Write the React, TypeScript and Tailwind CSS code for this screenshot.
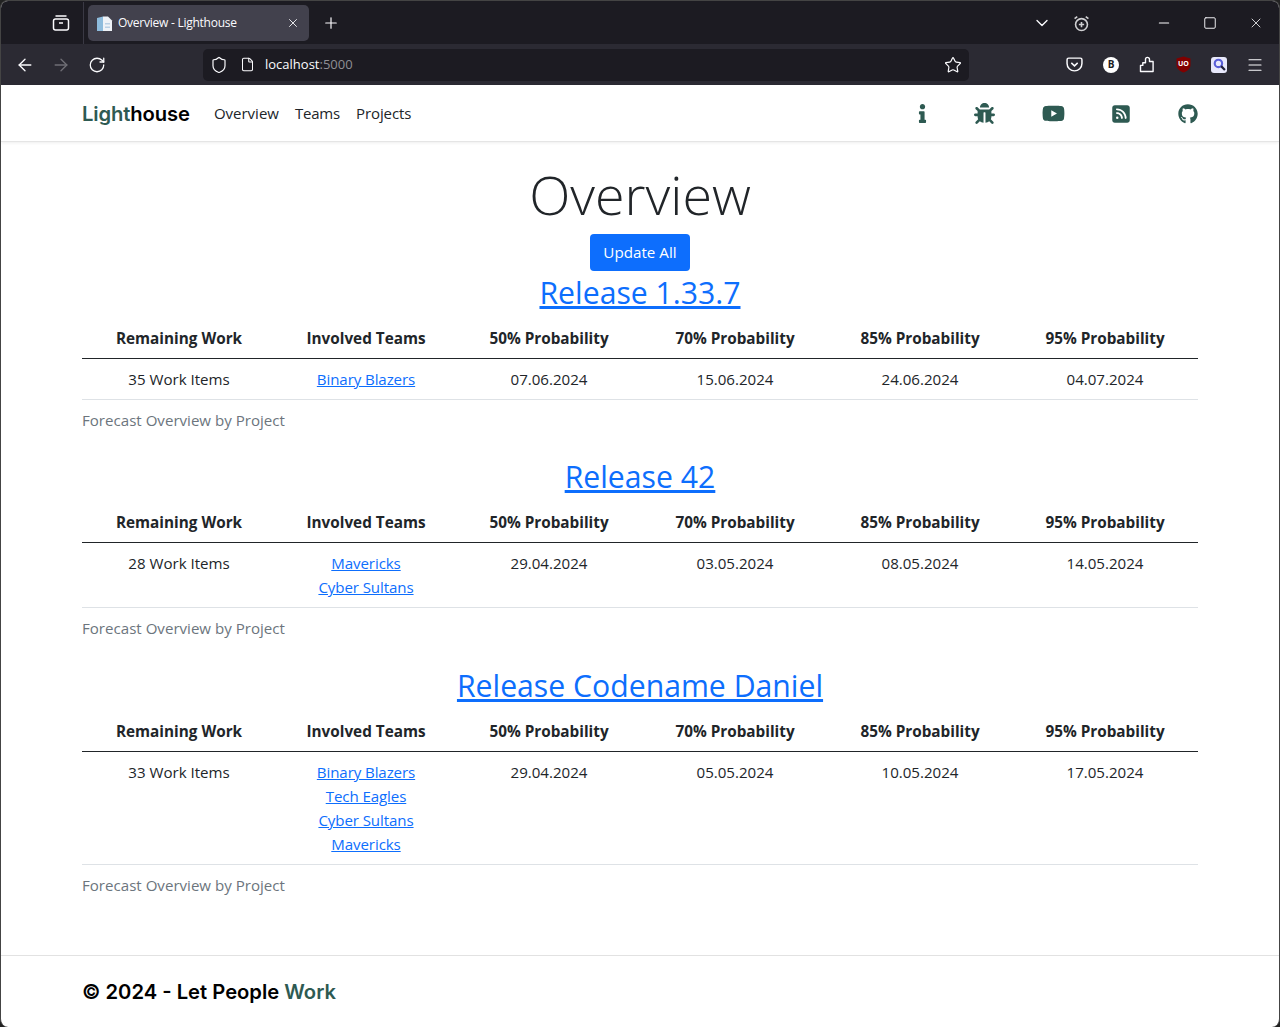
import { ArrowLeft, ArrowRight, ChevronDown, File, Menu, Minus, Plus, RotateCw, Shield, Square, Star, X } from "lucide-react";
import { FaBug, FaGithub, FaInfo, FaYoutube } from "react-icons/fa";
import { FaSquareRss } from "react-icons/fa6";

const columns = ["Remaining Work", "Involved Teams", "50% Probability", "70% Probability", "85% Probability", "95% Probability"];

const releases = [
  { name: "Release 1.33.7", work: "35 Work Items", teams: ["Binary Blazers"], dates: ["07.06.2024", "15.06.2024", "24.06.2024", "04.07.2024"] },
  { name: "Release 42", work: "28 Work Items", teams: ["Mavericks", "Cyber Sultans"], dates: ["29.04.2024", "03.05.2024", "08.05.2024", "14.05.2024"] },
  { name: "Release Codename Daniel", work: "33 Work Items", teams: ["Binary Blazers", "Tech Eagles", "Cyber Sultans", "Mavericks"], dates: ["29.04.2024", "05.05.2024", "10.05.2024", "17.05.2024"] },
];

const BrowserChrome = () => (
  <div className="text-[#fbfbfe]">
    <div className="flex h-[43px] items-center bg-[#1c1b22] pt-px">
      <div className="flex h-full w-[83px] items-center justify-center border-r border-[#3a3944] pl-[41px] pr-[3px]">
        <svg width="18" height="18" viewBox="0 0 18 18" fill="none" stroke="currentColor" strokeWidth="1.5">
          <rect x="1.5" y="5" width="15" height="11" rx="2" />
          <path d="M3.5 2h11M7 9h4" />
        </svg>
      </div>
      <div className="ml-[4px] flex h-[36px] w-[221px] items-center rounded-[5px] bg-[#42414d] pl-[8px] pr-[9px]">
        <svg width="17" height="17" viewBox="0 0 17 17">
          <path d="M1 3 7 1.5V16H1Z" fill="#8dbbdc" />
          <path d="M7 1.5h5l4 4V16H7Z" fill="#eef2f7" />
          <path d="M9 8h5v1.5H9ZM9 11.5h5V13H9Z" fill="#b9cfe4" />
        </svg>
        <span className="ml-[5px] flex-1 text-[12px] tracking-[-0.25px]">Overview - Lighthouse</span>
        <X size={14} strokeWidth={1.5} />
      </div>
      <Plus size={18} strokeWidth={1.6} className="ml-[13px]" />
      <div className="flex-1" />
      <ChevronDown size={20} strokeWidth={1.6} className="mr-[21px]" />
      <svg width="17" height="17" viewBox="0 0 16 16" fill="none" stroke="#cfcfd2" strokeWidth="1.5" className="mr-[66px]">
        <circle cx="8" cy="9" r="5.6" />
        <path d="M1.5 3.5 4 1.5M14.5 3.5 12 1.5M8 6.5v5M5.5 9h5" />
      </svg>
      <Minus size={16} strokeWidth={1.6} className="mr-[31px]" />
      <Square size={14} strokeWidth={1.6} className="mr-[31px]" />
      <X size={16} strokeWidth={1.2} className="mr-[15px]" />
    </div>
    <div className="flex h-[41px] items-center bg-[#2b2a33]">
      <ArrowLeft size={20} strokeWidth={1.6} className="ml-[14px]" />
      <ArrowRight size={20} strokeWidth={1.6} className="ml-[16px] text-[#6f6e75]" />
      <RotateCw size={18} strokeWidth={1.7} className="ml-[17px]" />
      <div className="ml-[97px] flex h-[32px] w-[766px] items-center rounded-[5px] bg-[#1c1b22] pl-[7px] pr-[7px]">
        <Shield size={18} strokeWidth={1.6} />
        <File size={15} strokeWidth={1.7} className="ml-[12px]" />
        <span className="ml-[10px] flex-1 text-[13px]">
          localhost<span className="text-[#8f8f94]">:5000</span>
        </span>
        <Star size={18} strokeWidth={1.6} />
      </div>
      <div className="flex-1" />
      <svg width="17" height="15" viewBox="0 0 16 14" fill="none" stroke="currentColor" strokeWidth="1.4" className="mr-[20px]">
        <path d="M2.5 1h11A1.5 1.5 0 0 1 15 2.5V6a7 7 0 0 1-14 0V2.5A1.5 1.5 0 0 1 2.5 1Z" />
        <path d="m5 5.5 3 2.8 3-2.8" />
      </svg>
      <div className="mr-[20px] flex h-[16px] w-[16px] items-center justify-center rounded-full bg-white text-[10px] font-bold text-[#1c1b22]">B</div>
      <svg width="16" height="17" viewBox="0 0 16 17" fill="none" stroke="currentColor" strokeWidth="1.4" strokeLinejoin="round" className="mr-[21px]">
        <path d="M1.5 15.5h12.6V5.5h-3.6V3.4a2 2 0 0 0-4 0v3.4H3.8v2.6H1.5Z" />
      </svg>
      <svg width="15" height="17" viewBox="0 0 15 17" className="mr-[20px]">
        <path d="M7.5 0.5 14.5 2.5V9c0 3.5-3 6-7 7.5C3.5 15 .5 12.5.5 9V2.5Z" fill="#800000" />
        <text x="7.5" y="10" textAnchor="middle" fontSize="7" fontWeight="700" fill="#fff">UO</text>
      </svg>
      <div className="mr-[19px] flex h-[16px] w-[16px] items-center justify-center rounded-[3px] bg-[#e8e8fb]">
        <svg width="13" height="13" viewBox="0 0 12 12" fill="none" strokeWidth="2">
          <circle cx="5" cy="5" r="3.4" stroke="#5a5fd8" />
          <path d="m7.5 7.5 3.5 3.5" stroke="#20203a" />
        </svg>
      </div>
      <Menu size={18} strokeWidth={1.5} className="mr-[15px]" />
    </div>
  </div>
);

const Navbar = () => (
  <nav className="flex h-[57px] items-center border-b border-[#e5e5e5] bg-white pl-[81px] pr-[81px] pt-[1px] shadow-[0_1px_3px_rgba(0,0,0,0.07)]">
    <span className="mt-[1px] text-[20.2px] font-semibold tracking-[-0.1px] text-black [font-family:Inter,sans-serif]">
      <span className="text-[#2e5a52]">Light</span>house
    </span>
    <div className="ml-[24px] flex gap-[16px] text-[15px] text-[#212529]">
      <span>Overview</span>
      <span className="tracking-[-0.2px]">Teams</span>
      <span className="tracking-[-0.1px]">Projects</span>
    </div>
    <div className="flex-1" />
    <div className="flex items-center text-[#2e5a52]">
      <FaInfo size={19} className="mr-[42px]" />
      <FaBug size={21} className="mr-[47px]" />
      <FaYoutube size={23} className="mr-[46px]" />
      <FaSquareRss size={20} className="mr-[47px]" />
      <FaGithub size={20} />
    </div>
  </nav>
);

const ReleaseBlock = ({ release }: { release: (typeof releases)[number] }) => (
  <section className="mb-[16.3px]">
    <h2 className="mb-[8px] pt-[4px] text-center text-[30.2px] leading-[34px]">
      <a className="text-[#0d6efd] underline">{release.name}</a>
    </h2>
    <table className="w-full table-fixed border-collapse text-center text-[15.1px] leading-[24px] text-[#212529]">
      <colgroup>
        <col className="w-[194px]" />
        <col className="w-[180px]" />
        <col className="w-[186px]" />
        <col className="w-[186px]" />
        <col className="w-[184px]" />
        <col className="w-[186px]" />
      </colgroup>
      <thead>
        <tr className="border-b border-[#212529]">
          {columns.map((c) => (
            <th key={c} className="p-2 text-[15.3px] font-bold">{c}</th>
          ))}
        </tr>
      </thead>
      <tbody>
        <tr className="border-b border-[#dee2e6] align-top">
          <td className="p-2">{release.work}</td>
          <td className="p-2">
            {release.teams.map((t) => (
              <a key={t} className="block tracking-[-0.1px] text-[#0d6efd] underline">{t}</a>
            ))}
          </td>
          {release.dates.map((d, i) => (
            <td key={i} className="p-2">{d}</td>
          ))}
        </tr>
      </tbody>
    </table>
    <p className="py-2 text-[15.1px] leading-[24px] text-[#6c757d]">Forecast Overview by Project</p>
  </section>
);

export default function App() {
  return (
    <div className="h-[1027px] overflow-hidden bg-[#222] [font-family:'Open_Sans',sans-serif]">
      <div className="flex h-full flex-col overflow-hidden rounded-[8px] border-x border-t border-[#444] bg-white">
        <BrowserChrome />
        <Navbar />
        <main className="flex-1 px-[81px]">
          <h1 className="mb-[6px] mt-[19px] text-center text-[53.8px] font-light leading-[67px] text-[#212529]">Overview</h1>
          <div className="flex justify-center">
            <button className="h-[37px] w-[100px] rounded-[4px] bg-[#0d6efd] text-[15.2px] text-white">Update All</button>
          </div>
          <div className="pt-[1px]">
            {releases.map((r) => (
              <ReleaseBlock key={r.name} release={r} />
            ))}
          </div>
        </main>
        <footer className="flex h-[72px] items-center border-t border-[#e2e2e2] pl-[81px] pt-[2px] text-[20.2px] font-semibold text-black [font-family:Inter,sans-serif]">
          <span>© 2024 - Let People <span className="text-[#2e5a52]">Work</span></span>
        </footer>
      </div>
    </div>
  );
}
